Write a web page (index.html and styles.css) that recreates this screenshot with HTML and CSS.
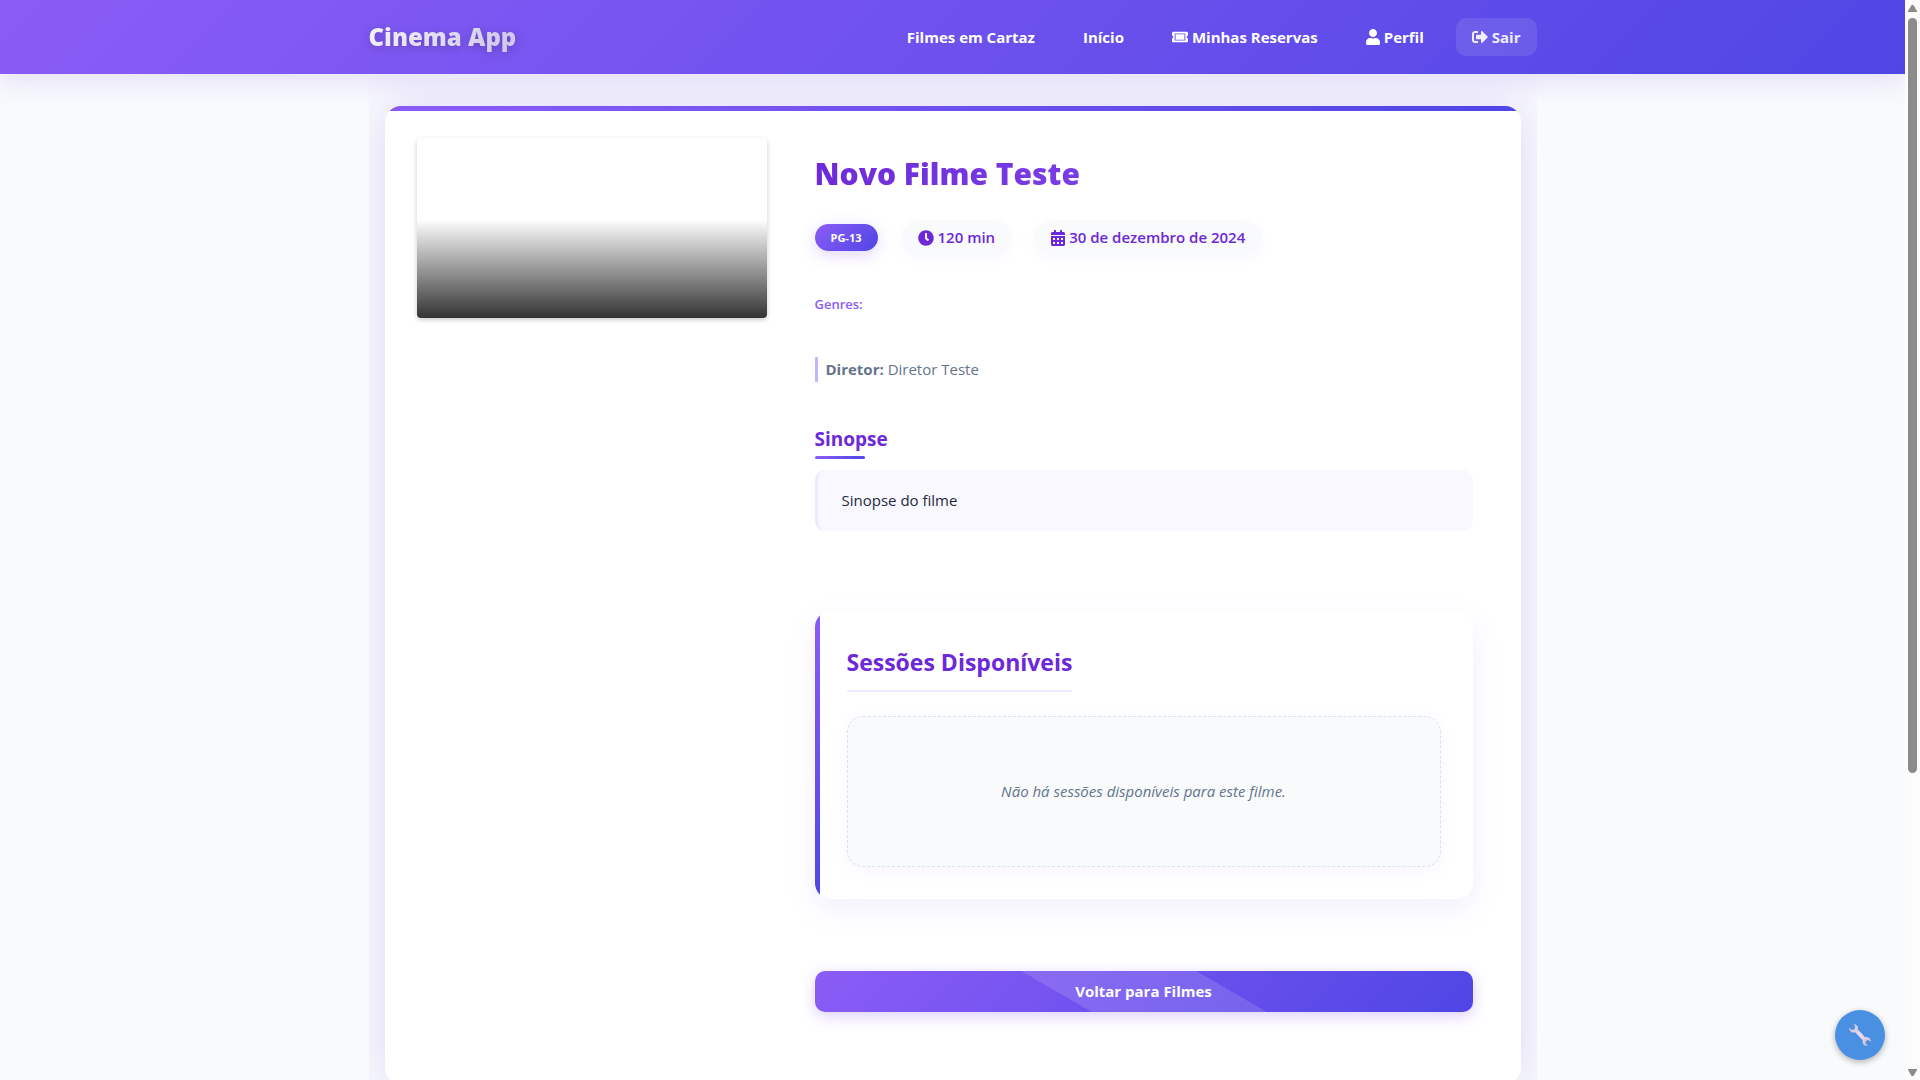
FILE: index.html
```html
<!DOCTYPE html>
<html lang="pt-BR">
<head>
<meta charset="utf-8">
<meta name="viewport" content="width=device-width, initial-scale=1">
<title>Novo Filme Teste - Cinema App</title>
<link rel="stylesheet" href="styles.css">
</head>
<body>
<header class="header">
  <div class="header-inner">
    <a class="logo" href="#">Cinema App</a>
    <nav class="nav">
      <a class="nav-link" href="#">Filmes em Cartaz</a>
      <a class="nav-link" href="#">Início</a>
      <a class="nav-link" href="#"><svg class="icon" viewBox="0 0 576 512" aria-hidden="true"><path d="M128 160h320v192H128V160zm400 96c0 26.51 21.49 48 48 48v96c0 26.51-21.49 48-48 48H48c-26.51 0-48-21.49-48-48v-96c26.51 0 48-21.49 48-48s-21.49-48-48-48v-96c0-26.51 21.49-48 48-48h480c26.51 0 48 21.49 48 48v96c-26.51 0-48 21.49-48 48zm-48-104c0-13.255-10.745-24-24-24H120c-13.255 0-24 10.745-24 24v208c0 13.255 10.745 24 24 24h336c13.255 0 24-10.745 24-24V152z"/></svg>Minhas Reservas</a>
      <a class="nav-link" href="#"><svg class="icon icon-narrow" viewBox="0 0 448 512" aria-hidden="true"><path d="M224 256c70.7 0 128-57.3 128-128S294.7 0 224 0 96 57.3 96 128s57.3 128 128 128zm89.6 32h-16.7c-22.2 10.2-46.9 16-72.9 16s-50.6-5.8-72.9-16h-16.7C60.2 288 0 348.2 0 422.4V464c0 26.5 21.5 48 48 48h352c26.5 0 48-21.5 48-48v-41.6c0-74.2-60.2-134.4-134.4-134.4z"/></svg>Perfil</a>
      <button class="nav-link logout" type="button"><svg class="icon" viewBox="0 0 512 512" aria-hidden="true"><path d="M497 273L329 441c-15 15-41 4.5-41-17v-96H152c-13.3 0-24-10.7-24-24v-96c0-13.3 10.7-24 24-24h136V88c0-21.4 25.9-32 41-17l168 168c9.3 9.4 9.3 24.6 0 34zM192 436v-40c0-6.6-5.4-12-12-12H96c-17.7 0-32-14.3-32-32V160c0-17.7 14.3-32 32-32h84c6.6 0 12-5.4 12-12V76c0-6.6-5.4-12-12-12H96c-53 0-96 43-96 96v192c0 53 43 96 96 96h84c6.6 0 12-5.4 12-12z"/></svg>Sair</button>
    </nav>
  </div>
</header>
<main class="main">
  <article class="movie">
    <div class="poster"></div>
    <div class="details">
      <h1 class="title">Novo Filme Teste</h1>
      <div class="meta">
        <span class="rating">PG-13</span>
        <span class="pill"><svg class="icon" viewBox="0 0 512 512" aria-hidden="true"><path d="M256,8C119,8,8,119,8,256S119,504,256,504,504,393,504,256,393,8,256,8Zm92.49,313h0l-20,25a16,16,0,0,1-22.49,2.5h0l-67-49.72a40,40,0,0,1-15-31.23V112a16,16,0,0,1,16-16h32a16,16,0,0,1,16,16V256l58,42.5A16,16,0,0,1,348.49,321Z"/></svg>120 min</span>
        <span class="pill"><svg class="icon icon-narrow" viewBox="0 0 448 512" aria-hidden="true"><path fill-rule="evenodd" d="M0 464c0 26.500 21.500 48 48 48h352c26.500 0 48-21.500 48-48V192H0zM64 256h64v64H64zM192 256h64v64h-64zM320 256h64v64h-64zM64 384h64v64H64zM192 384h64v64h-64zM320 384h64v64h-64zM400 64h-48V16c0-9-7-16-16-16h-32c-9 0-16 7-16 16v48H160V16c0-9-7-16-16-16h-32c-9 0-16 7-16 16v48H48C21.500 64 0 85.500 0 112v48h448v-48c0-26.500-21.500-48-48-48z"/></svg>30 de dezembro de 2024</span>
      </div>
      <p class="genres">Genres:</p>
      <p class="director"><strong>Diretor:</strong> Diretor Teste</p>
      <section class="synopsis">
        <h2 class="synopsis-title">Sinopse</h2>
        <p class="synopsis-text">Sinopse do filme</p>
      </section>
      <section class="sessions">
        <h2 class="sessions-title">Sessões Disponíveis</h2>
        <p class="empty">Não há sessões disponíveis para este filme.</p>
      </section>
      <a class="back" href="#">Voltar para Filmes</a>
    </div>
  </article>
</main>
<button class="tools" type="button" aria-label="Ferramentas">
  <svg class="tools-icon" viewBox="0 0 24 24" aria-hidden="true">
    <defs><linearGradient id="steel" x1="0" y1="0" x2="1" y2="1"><stop offset="0" stop-color="#c9bfd2"/><stop offset=".5" stop-color="#eadcf5"/><stop offset="1" stop-color="#bfb5c8"/></linearGradient></defs>
    <path fill="url(#steel)" d="M5.500 1.200C8.500 .8 10.600 3.200 9.800 6.400L17.200 14.300C20.500 13.400 23.300 15.800 23 19L20.400 16.900 18 17.700 17.500 20.200 20 22.800C16.600 23.600 13.800 20.800 14.700 17.200L7.200 9.200C3.800 10.200 .9 7.800 1.200 4.400L3.800 7 6.500 6.300 7.200 3.600Z"/>
  </svg>
</button>
<div class="scrollbar" aria-hidden="true">
  <span class="arrow arrow-up"></span>
  <span class="thumb"></span>
  <span class="arrow arrow-down"></span>
</div>
</body>
</html>
```
FILE: styles.css
```css
:root {
  --primary: #8b5cf6;
  --primary-dark: #6d28d9;
  --muted: #64748b;
  --surface: #f8fafc;
  --gradient: linear-gradient(135deg, #8b5cf6, #4f46e5);
}

* {
  box-sizing: border-box;
}

html {
  scrollbar-width: none;
}

body {
  margin: 0;
  padding-right: 15px;
  background: var(--surface);
  color: #1e293b;
  font: 16px/25px "Open Sans", "Noto Sans", sans-serif;
}

h1, h2, p {
  margin: 0;
}

.header {
  position: relative;
  padding: 18px 16px;
  background: var(--gradient);
  box-shadow: 0 10px 25px rgba(139, 92, 246, 0.15);
}

.header-inner {
  display: flex;
  align-items: center;
  justify-content: space-between;
  max-width: 1168px;
  margin: 0 auto;
}

.logo {
  background: linear-gradient(135deg, #f6f4fa, #ccc4e6);
  background-clip: text;
  -webkit-background-clip: text;
  color: transparent;
  font-size: 24px;
  font-weight: 800;
  line-height: 38px;
  text-decoration: none;
  filter: drop-shadow(0 2px 4px rgba(0, 0, 0, 0.2));
}

.nav {
  display: flex;
  gap: 16px;
}

.nav-link {
  display: flex;
  align-items: center;
  gap: 4px;
  height: 38px;
  padding: 0 16px;
  color: #fff;
  font-family: inherit;
  font-size: 15px;
  font-weight: 700;
  text-decoration: none;
}

.logout {
  border: 0;
  border-radius: 10px;
  background: rgba(255, 255, 255, 0.1);
  color: rgba(255, 255, 255, 0.9);
}

.icon {
  width: 16px;
  height: 16px;
  fill: currentColor;
}

.icon-narrow {
  width: 14px;
}

.main {
  max-width: 1168px;
  margin: 0 auto;
  padding: 32px 16px;
  overflow: hidden;
}

.movie {
  display: grid;
  grid-template-columns: 350px 1fr;
  gap: 32px;
  align-items: start;
  padding: 32px;
  border-radius: 16px;
  background: linear-gradient(135deg, #8b5cf6, #4f46e5) top / 100% 5px no-repeat, #fff;
  box-shadow: 0 0 50px rgba(109, 60, 230, 0.18);
}

.poster {
  height: 180px;
  border-radius: 4px;
  background: linear-gradient(to bottom, transparent 45%, rgba(0, 0, 0, 0.8));
  box-shadow: 0 2px 5px rgba(0, 0, 0, 0.2);
}

.details {
  padding: 16px 16px 40px;
}

.title {
  background: linear-gradient(135deg, #6d28d9, #8b5cf6);
  background-clip: text;
  -webkit-background-clip: text;
  color: transparent;
  font-size: 30px;
  font-weight: 800;
  line-height: 40px;
}

.meta {
  display: flex;
  align-items: center;
  gap: 24px;
  margin-top: 26px;
}

.rating {
  padding: 0 16px;
  border-radius: 16px;
  background: var(--gradient);
  box-shadow: 0 4px 15px rgba(139, 92, 246, 0.25);
  color: #fff;
  font-size: 11px;
  font-weight: 700;
  line-height: 27px;
}

.pill {
  display: flex;
  align-items: center;
  gap: 4px;
  padding: 5px 16px;
  border-radius: 20px;
  background: var(--surface);
  box-shadow: 0 4px 12px rgba(139, 92, 246, 0.05);
  color: var(--primary-dark);
  font-size: 15px;
  font-weight: 600;
}

.genres {
  margin-top: 37px;
  color: var(--primary);
  font-size: 13px;
  font-weight: 600;
}

.director {
  margin-top: 40px;
  padding-left: 8px;
  border-left: 3px solid #c4b5fd;
  color: var(--muted);
  font-size: 15px;
}

.synopsis {
  margin-top: 40px;
}

.synopsis-title {
  color: var(--primary-dark);
  font-size: 19px;
  font-weight: 700;
  line-height: 34px;
}

.synopsis-title::after {
  display: block;
  width: 50px;
  height: 3px;
  border-radius: 2px;
  background: var(--gradient);
  content: "";
}

.synopsis-text {
  margin-top: 11px;
  padding: 18px 24px;
  border-left: 3px solid #ede9fe;
  border-radius: 10px;
  background: #f9f8ff;
  font-size: 15px;
}

.sessions {
  margin-top: 80px;
  padding: 32px;
  border-radius: 16px;
  background: linear-gradient(to bottom, #8b5cf6, #4f46e5) left / 5px 100% no-repeat, #fff;
  box-shadow: 0 10px 30px rgba(139, 92, 246, 0.1);
}

.sessions-title {
  width: fit-content;
  padding-bottom: 8px;
  border-bottom: 2px solid #ede9fe;
  color: var(--primary-dark);
  font-size: 23px;
  font-weight: 700;
  line-height: 39px;
}

.empty {
  margin-top: 24px;
  padding: 62px 32px;
  border: 1px dashed #dbe3f0;
  border-radius: 16px;
  background: var(--surface);
  box-shadow: 0 4px 15px rgba(139, 92, 246, 0.06);
  color: var(--muted);
  font-size: 15px;
  font-style: italic;
  text-align: center;
}

.back {
  display: block;
  margin-top: 72px;
  border-radius: 10px;
  background:
    linear-gradient(30deg, transparent 38%, rgba(255, 255, 255, 0.13) 38% 62%, transparent 62%),
    var(--gradient);
  box-shadow: 0 4px 15px rgba(139, 92, 246, 0.3);
  color: #fff;
  font-size: 15px;
  font-weight: 700;
  line-height: 41px;
  text-align: center;
  text-decoration: none;
}

.tools {
  position: fixed;
  right: 35px;
  bottom: 20px;
  display: grid;
  place-items: center;
  width: 50px;
  height: 50px;
  padding: 0;
  border: 0;
  border-radius: 50%;
  background: #4a90e2;
  box-shadow: 0 2px 6px rgba(0, 0, 0, 0.3);
}

.tools-icon {
  width: 24px;
  height: 24px;
}

.scrollbar {
  position: fixed;
  inset: 0 0 0 auto;
  display: flex;
  flex-direction: column;
  align-items: center;
  width: 15px;
  padding: 5px 0 4px;
  background: #fcfcfc;
}

.thumb {
  width: 9px;
  height: 70.5%;
  margin: 6px 0 auto;
  border-radius: 5px;
  background: #8b8b8b;
}

.arrow {
  width: 9px;
  height: 7px;
  background: #8b8b8b;
}

.arrow-up {
  clip-path: polygon(40% 0, 60% 0, 100% 85%, 100% 100%, 0 100%, 0 85%);
}

.arrow-down {
  clip-path: polygon(0 0, 100% 0, 100% 15%, 60% 100%, 40% 100%, 0 15%);
}
```
